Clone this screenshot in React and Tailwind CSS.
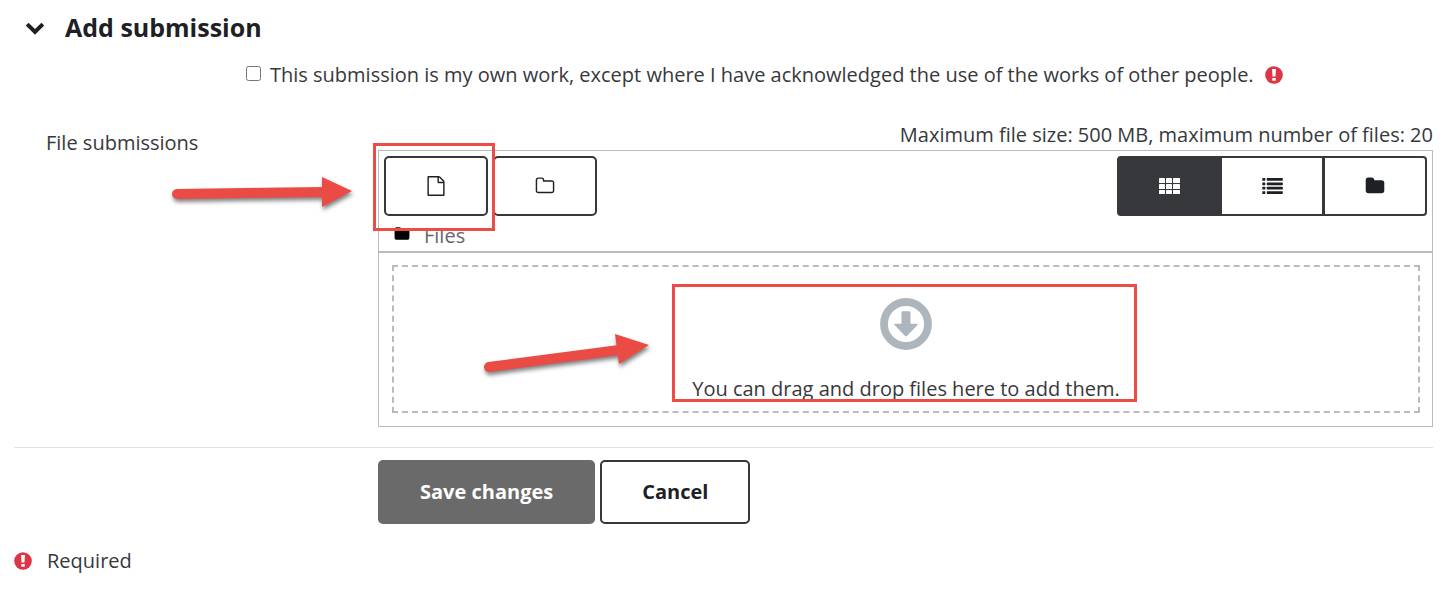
import { useState } from "react";

const ICONS = {
  chevron:
    "M1683 808l-742 741q-19 19-45 19t-45-19l-742-741q-19-19-19-45.5t19-45.5l166-165q19-19 45-19t45 19l531 531 531-531q19-19 45-19t45 19l166 165q19 19 19 45.5t-19 45.5z",
  file:
    "M1596 380q28 28 48 76t20 88v1152q0 40-28 68t-68 28h-1344q-40 0-68-28t-28-68v-1600q0-40 28-68t68-28h896q40 0 88 20t76 48zm-444-244v376h376q-10-29-22-41l-313-313q-12-12-41-22zm384 1528v-1024h-416q-40 0-68-28t-28-68v-416h-768v1536h1280z",
  folderOutline:
    "M1600 1312v-704q0-40-28-68t-68-28h-704q-40 0-68-28t-28-68v-64q0-40-28-68t-68-28h-320q-40 0-68 28t-28 68v960q0 40 28 68t68 28h1216q40 0 68-28t28-68zm128-704v704q0 92-66 158t-158 66h-1216q-92 0-158-66t-66-158v-960q0-92 66-158t158-66h320q92 0 158 66t66 158v32h672q92 0 158 66t66 158z",
  folder:
    "M1728 608v704q0 92-66 158t-158 66h-1216q-92 0-158-66t-66-158v-960q0-92 66-158t158-66h320q92 0 158 66t66 158v32h672q92 0 158 66t66 158z",
};

function Icon({ name, className = "size-5" }) {
  return (
    <svg viewBox="0 0 1792 1792" fill="currentColor" className={className} aria-hidden="true">
      <path d={ICONS[name]} />
    </svg>
  );
}

function GridIcon() {
  return (
    <svg viewBox="0 0 21 16" fill="currentColor" className="h-4 w-[21px]" aria-hidden="true">
      {[0, 7, 14].map((x) =>
        [0, 6, 12].map((y) => (
          <rect key={`${x}-${y}`} x={x} y={y} width={x === 14 ? 7 : 6} height={y === 12 ? 4 : 5} rx="0.6" />
        ))
      )}
    </svg>
  );
}

function ListIcon() {
  return (
    <svg viewBox="0 0 21 16" fill="currentColor" className="h-4 w-[21px]" aria-hidden="true">
      {[0, 4.4, 8.8, 13.2].map((y) => (
        <g key={y}>
          <rect x="0.3" y={y} width="3" height="2.8" rx="0.4" />
          <rect x="4.8" y={y} width="16" height="2.8" rx="0.4" />
        </g>
      ))}
    </svg>
  );
}

function RequiredIcon() {
  return (
    <svg viewBox="0 0 18 18" className="size-[18px] shrink-0" role="img" aria-label="Required">
      <circle cx="9" cy="9" r="8.8" fill="#dc3545" />
      <path d="M7.1 3h3.8l-.4 7.6h-3z" fill="#fff" />
      <rect x="7.3" y="12" width="3.4" height="2.8" rx="0.4" fill="#fff" />
    </svg>
  );
}

function DownloadIcon() {
  return (
    <svg viewBox="0 0 52 52" className="size-[52px]" aria-hidden="true">
      <circle cx="26" cy="26" r="22" fill="none" stroke="#adb5bd" strokeWidth="7.8" />
      <path
        d="M22.4 13.2h7.2q.9 0 .9.9v11.6h6.3q1.8 0 .7 1.3L26.9 38q-.9.8-1.8 0L14.5 27q-1.1-1.3.7-1.3h6.3V14.1q0-.9.9-.9z"
        fill="#adb5bd"
      />
    </svg>
  );
}

// Red callout arrow with a soft shadow
function Arrow({ shaft, head, className }) {
  return (
    <svg
      viewBox="0 0 190 60"
      className={`pointer-events-none absolute h-[60px] w-[190px] drop-shadow-[1px_3px_2px_rgba(0,0,0,0.5)] ${className}`}
      aria-hidden="true"
    >
      <path d={shaft} stroke="#ea4b44" strokeWidth="10" strokeLinecap="round" />
      <path d={head} fill="#ea4b44" />
    </svg>
  );
}

const VIEWS = [
  { id: "icons", label: "Display folder with file icons", icon: <GridIcon />, shape: "rounded-l-[4px]" },
  { id: "list", label: "Display folder with file details", icon: <ListIcon />, shape: "-ml-px" },
  { id: "tree", label: "Display folder as file tree", icon: <Icon name="folder" />, shape: "-ml-px rounded-r-[4px]" },
];

const toolButton =
  "flex h-[60px] w-[104px] items-center justify-center border-2 border-[#37383c]";

function FileManager() {
  const [view, setView] = useState("icons");

  return (
    <div className="border border-[#bbb]">
      <div className="border-b border-[#bbb] px-[5px] pt-[5px]">
        <div className="flex justify-between text-[#1d2125]">
          <div className="flex gap-[5px]">
            <div className="relative">
              <button type="button" aria-label="Add..." className={`${toolButton} rounded-[5px] bg-white`}>
                <Icon name="file" />
              </button>
              <div className="pointer-events-none absolute -top-[13px] -right-[7px] -bottom-[15px] -left-[11px] z-10 border-3 border-[#ec4b46]" />
            </div>
            <button type="button" aria-label="Create folder" className={`${toolButton} rounded-[5px] bg-white`}>
              <Icon name="folderOutline" />
            </button>
          </div>
          <div className="flex">
            {VIEWS.map(({ id, label, icon, shape }) => (
              <button
                key={id}
                type="button"
                aria-label={label}
                aria-pressed={view === id}
                onClick={() => setView(id)}
                className={`${toolButton} ${shape} ${view === id ? "bg-[#37383c] text-white" : "bg-white"}`}
              >
                {icon}
              </button>
            ))}
          </div>
        </div>
        <div className="flex h-[35px] items-center gap-[14px] px-[10px] pt-1">
          <Icon name="folder" className="mb-1 size-4 text-black" />
          <a href="#files" className="text-[#666]">Files</a>
        </div>
      </div>
      <div className="border-t border-[#bbb] pt-3 pr-3 pb-[13px] pl-[13px]">
        <div className="flex h-[148px] justify-center border-2 border-dashed border-[#bbb] pt-[17px]">
          <div className="relative flex flex-col items-center px-[17px] pt-[14px]">
            <DownloadIcon />
            <p className="mt-6">You can drag and drop files here to add them.</p>
            <div className="pointer-events-none absolute top-0 right-0 left-[-3px] h-[118px] border-3 border-[#ec4b46]" />
            <Arrow
              className="top-[33px] right-full mr-2"
              shaft="M12 50L150 32"
              head="M138 17L172 28L142 47z"
            />
          </div>
        </div>
      </div>
    </div>
  );
}

export default function App() {
  return (
    <form
      onSubmit={(e) => e.preventDefault()}
      className="bg-white pt-[9px] pr-[22px] pb-4 pl-[14px] font-['Open_Sans',sans-serif] text-[20px] leading-[30px] text-[#37383c]"
    >
      <h3 className="text-[25px] leading-9 font-bold text-[#1d2125]">
        <button type="button" aria-expanded="true" className="flex items-center gap-5 pl-[11px]">
          <Icon name="chevron" />
          Add submission
        </button>
      </h3>

      <div className="mt-[15px] flex items-center pl-[232px]">
        <input id="statement" type="checkbox" className="mr-[9px] mb-1 size-[15px]" />
        <label htmlFor="statement" className="mr-[11px]">
          This submission is my own work, except where I have acknowledged the use of the works of other people.
        </label>
        <RequiredIcon />
      </div>

      <div className="mt-[30px] flex">
        <div className="relative w-[364px] shrink-0 pt-2 pl-8">
          File submissions
          <Arrow
            className="top-[49px] left-[151px]"
            shaft="M12 25L160 23"
            head="M157 8L187 22L157 38z"
          />
        </div>
        <div className="min-w-0 flex-1">
          <p className="text-right">Maximum file size: 500 MB, maximum number of files: 20</p>
          <FileManager />
        </div>
      </div>

      <div className="mt-5 flex gap-[5px] border-t border-[#dee2e6] pt-3 pl-[364px] font-bold">
        <button type="submit" className="h-16 rounded-[5px] bg-[#6a6a6a] px-[42px] text-white">
          Save changes
        </button>
        <button type="button" className="h-16 rounded-[5px] border-2 border-[#37383c] bg-white px-10 text-[#1d2125]">
          Cancel
        </button>
      </div>

      <div className="mt-[22px] flex items-center gap-[15px]">
        <RequiredIcon />
        Required
      </div>
    </form>
  );
}
